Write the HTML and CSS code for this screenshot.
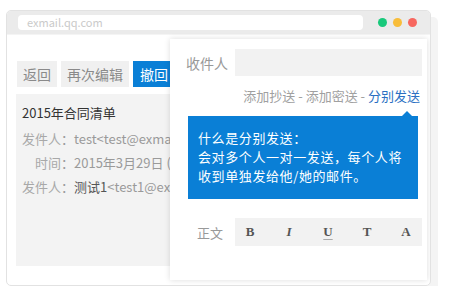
FILE: index.html
```html
<!DOCTYPE html>
<html lang="zh-CN">
<head>
    <meta charset="UTF-8">
    <meta name="viewport" content="width=device-width, initial-scale=1.0">
    <title>分别发送</title>
    <link rel="stylesheet" href="styles.css">
</head>
<body>
    <div class="stage">
        <div class="window">
            <!-- browser chrome -->
            <div class="titlebar">
                <div class="url">exmail.qq.com</div>
                <div class="dots">
                    <span class="dot green"></span>
                    <span class="dot yellow"></span>
                    <span class="dot red"></span>
                </div>
            </div>

            <!-- read mail page, partly hidden by the compose panel -->
            <div class="page">
                <div class="actions">
                    <button class="btn">返回</button>
                    <button class="btn">再次编辑</button>
                    <button class="btn primary">撤回</button>
                </div>
                <div class="mail">
                    <div class="subject">2015年合同清单</div>
                    <div class="meta"><span class="key">发件人</span>：test&lt;test@exma</div>
                    <div class="meta"><span class="key">时间</span>：2015年3月29日 (</div>
                    <div class="meta"><span class="key">发件人</span>：<span class="name">测试1</span>&lt;test1@ex</div>
                </div>
            </div>

            <!-- compose panel lying over the page -->
            <div class="compose">
                <div class="row to-row">
                    <span class="label">收件人</span>
                    <div class="field"></div>
                </div>
                <div class="links">添加抄送 - 添加密送 - <a href="#" class="active">分别发送</a></div>
                <div class="tip">
                    <div class="tip-line">什么是分别发送：</div>
                    <div class="tip-line">会对多个人一对一发送，每个人将</div>
                    <div class="tip-line">收到单独发给他/她的邮件。</div>
                </div>
                <div class="row body-row">
                    <span class="label">正文</span>
                    <div class="toolbar">
                        <span class="tool">B</span>
                        <span class="tool italic">I</span>
                        <span class="tool underline">U</span>
                        <span class="tool">T</span>
                        <span class="tool">A</span>
                    </div>
                </div>
            </div>
        </div>
    </div>
</body>
</html>
```

FILE: styles.css
```css
body {
    font-family: "Noto Sans CJK SC", "Noto Sans", sans-serif;
    margin: 0;
    background-color: #fff;
}
.stage {
    padding: 10px 0 0 6px;
}
.window {
    position: relative;
    width: 425px;
    height: 276px;
    box-sizing: border-box;
    border: 1px solid #e2e2e2;
    border-radius: 5px;
    background: #fff;
    box-shadow: 7px 7px 0 #f4f4f4;
    overflow: hidden;
}
.titlebar {
    display: flex;
    align-items: center;
    height: 23px;
    padding-left: 11px;
    background: #ebebeb;
    border-bottom: 1px solid #f4f4f4;
}
.url {
    width: 336px;
    height: 15px;
    padding-left: 9px;
    background: #fff;
    border-radius: 4px;
    color: #cacaca;
    font-size: 11px;
    line-height: 15px;
}
.dots {
    display: flex;
    gap: 6px;
    margin-left: 15px;
}
.dot {
    width: 9px;
    height: 9px;
    border-radius: 50%;
}
.green { background: #18c97b; }
.yellow { background: #f8bd3a; }
.red { background: #f7675f; }

.page {
    padding: 26px 0 0 9px;
}
.actions {
    display: flex;
    gap: 4px;
    margin-left: 1px;
}
.btn {
    height: 26px;
    padding: 0 6px;
    border: none;
    background: #f0f0f0;
    color: #8a8a8a;
    font-family: inherit;
    font-size: 14px;
    line-height: 26px;
}
.btn.primary {
    padding: 0 7px;
    background: #0a7fd6;
    color: #fff;
}
.mail {
    width: 405px;
    height: 172px;
    box-sizing: border-box;
    margin-top: 7px;
    padding: 7px 6px 0;
    background: #f3f3f3;
    font-size: 13px;
    white-space: nowrap;
}
.subject {
    color: #333;
    line-height: 24px;
    margin-bottom: 2px;
}
.meta {
    color: #9a9a9a;
    line-height: 24px;
}
.key {
    display: inline-block;
    width: 39px;
    text-align: right;
    color: #a8a8a8;
}
.name {
    color: #555;
}

.compose {
    position: absolute;
    left: 163px;
    top: 28px;
    width: 257px;
    height: 241px;
    padding-top: 10px;
    box-sizing: border-box;
    background: #fff;
    box-shadow: 0 0 6px rgba(0, 0, 0, 0.14);
}
.row {
    display: flex;
    align-items: center;
}
.label {
    width: 65px;
    box-sizing: border-box;
    color: #999;
}
.to-row .label {
    padding-left: 16px;
    font-size: 14px;
}
.field {
    width: 187px;
    height: 27px;
    background: #f2f2f2;
}
.links {
    margin-top: 10px;
    padding-right: 7px;
    text-align: right;
    color: #a0a0a0;
    font-size: 13px;
    line-height: 20px;
}
.links a {
    color: #2b6fc2;
    text-decoration: none;
}
.tip {
    position: relative;
    width: 230px;
    height: 83px;
    box-sizing: border-box;
    margin: 10px 0 0 18px;
    padding: 12px 0 0 10px;
    background: #0a7fd6;
    color: #fff;
    font-size: 13px;
    letter-spacing: 0.6px;
    white-space: nowrap;
}
.tip-line {
    height: 19px;
    line-height: 19px;
}
.tip::before {
    content: "";
    position: absolute;
    top: -5px;
    right: 6px;
    border-left: 5px solid transparent;
    border-right: 5px solid transparent;
    border-bottom: 5px solid #0a7fd6;
}
.body-row {
    margin-top: 19px;
}
.body-row .label {
    padding-left: 27px;
    font-size: 13px;
}
.toolbar {
    display: flex;
    align-items: center;
    gap: 29px;
    width: 187px;
    height: 28px;
    padding-left: 10px;
    box-sizing: border-box;
    background: #f2f2f2;
}
.tool {
    width: 10px;
    text-align: center;
    color: #555;
    font-family: "Liberation Serif", serif;
    font-weight: bold;
    font-size: 13px;
}
.tool.italic {
    font-style: italic;
}
.tool.underline {
    text-decoration: underline;
    text-decoration-color: #aaa;
    text-underline-offset: 3px;
}
```
